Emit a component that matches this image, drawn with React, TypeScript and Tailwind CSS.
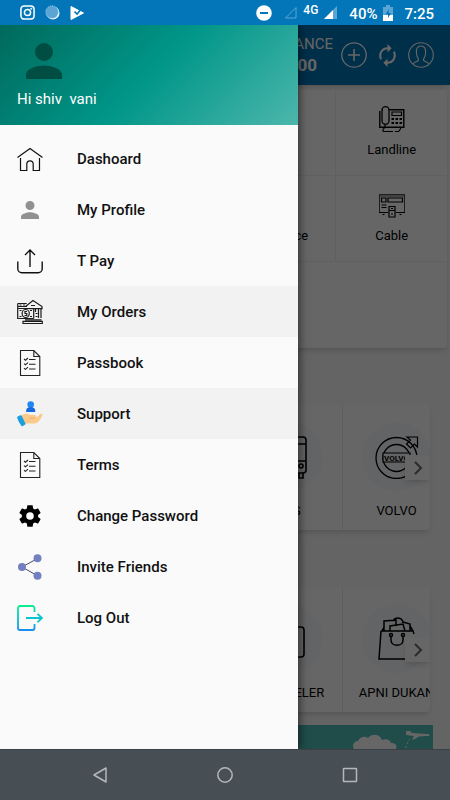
import type { ReactNode } from "react";

interface MenuItem {
  label: string;
  icon: ReactNode;
  active?: boolean;
}

function Svg({ children, size = "size-[26px]", box = "0 0 26 26" }: { children: ReactNode; size?: string; box?: string }) {
  return (
    <svg viewBox={box} className={`${size} shrink-0`} fill="none" aria-hidden="true">
      {children}
    </svg>
  );
}

function PersonIcon({ size }: { size: string }) {
  return (
    <Svg size={size} box="4 4 16 16">
      <path
        fill="currentColor"
        d="M12 12a4 4 0 1 0 0-8 4 4 0 0 0 0 8zm0 2c-2.67 0-8 1.34-8 4v2h16v-2c0-2.66-5.33-4-8-4z"
      />
    </Svg>
  );
}

function DocIcon() {
  return (
    <Svg>
      <path stroke="#222" strokeWidth="1.1" d="M3.5.5h13.3l6 6v19H3.5zM16.8.5v6h6" />
      <path stroke="#222" strokeWidth="1.1" d="M7 9l1.5 1.2L11 8M7 13.6l1.5 1.2 2.5-2.200M7 18.200l1.500 1.200 2.500-2.200M12 9.500h6.500M12 14.200h6.500M12 19h6.500" />
    </Svg>
  );
}

const menu: MenuItem[] = [
  {
    label: "Dashoard",
    icon: (
      <Svg>
        <path stroke="#111" strokeWidth="1.2" d="M.5 11.500 13 2.500l12.500 9M3.500 12v12.500h6.300V18a3.200 3.200 0 0 1 6.400 0v6.500h6.300V12" />
      </Svg>
    ),
  },
  {
    label: "My Profile",
    icon: <PersonIcon size="size-[18px] text-[#919191]" />,
  },
  {
    label: "T Pay",
    icon: (
      <Svg>
        <path stroke="#111" strokeWidth="1.4" d="M13 19V2M8 7l5-5 5 5M.8 13.500v7.200a4 4 0 0 0 4 4h16.400a4 4 0 0 0 4-4v-7.200" />
      </Svg>
    ),
  },
  {
    label: "My Orders",
    active: true,
    icon: (
      <Svg>
        <path stroke="#1c1c1c" strokeWidth="1.200" d="M.7 4.500h9M.7 4.500v15h16M1 7.500h9M.7 9.500h16v10M8.500 7.500 16 1.500l9 6v2.200H12M14 6.500h4M24 10v9M21.500 10v9M18.500 10v3M6 24.500h19.300v-2.200H6zM8 20.800h16.500M2.500 11.500h2M13 11.500h2M2.500 17.500h2M13 17.500h2M18.500 14.500h2M18.500 17.500h2M2.500 6h2M6 6h2" />
        <ellipse cx="8.700" cy="14.500" rx="3.600" ry="4" stroke="#1c1c1c" strokeWidth="1.200" />
        <path stroke="#1c1c1c" strokeWidth="1.200" d="M10 12.500H8v2h1.800v2H7.500" />
      </Svg>
    ),
  },
  { label: "Passbook", icon: <DocIcon /> },
  {
    label: "Support",
    active: true,
    icon: (
      <Svg>
        <circle cx="13.700" cy="3.500" r="3.300" fill="#1f86f2" />
        <path fill="#1468e0" d="M9.200 11V9.500c0-2 1.800-3.500 4.500-3.500s4.500 1.500 4.500 3.500V11z" />
        <path fill="#fbc98a" d="M4.500 14.500c2-1.700 4.600-2.200 6.700-1.500l2.300 1h4.300c1.600 0 1.800 2.300.4 2.500 2.400-.4 3-1.300 4.500-3 1-1 2.800-.8 2.800.4-.5 2-2.300 4.500-4 6.500-1.500 1.700-3.200 2-5.200 2H9.500l-1.500 1z" />
        <path stroke="#efa963" strokeWidth=".9" d="M12.500 17.200h5.600" />
        <path fill="#1a9fe0" d="m0 16 3.200-1.700c.7-.3 1.300 0 1.600.6l3.500 7.300c.3.7.1 1.300-.5 1.600L5 25.500C2.600 22.800.9 19.500 0 16z" />
      </Svg>
    ),
  },
  { label: "Terms", icon: <DocIcon /> },
  {
    label: "Change Password",
    icon: (
      <Svg box="0 0 24 24">
        <path
          fill="#000"
          d="M19.430 12.980c.04-.32.07-.64.07-.98s-.03-.66-.07-.98l2.110-1.650c.19-.15.24-.42.12-.64l-2-3.460c-.12-.22-.39-.3-.61-.22l-2.490 1c-.52-.4-1.080-.73-1.690-.98l-.38-2.650A.488.488 0 0 0 14 2h-4c-.25 0-.46.18-.49.42l-.38 2.650c-.61.25-1.170.59-1.690.98l-2.490-1c-.23-.09-.49 0-.61.22l-2 3.460c-.13.22-.07.49.12.64l2.110 1.650c-.04.32-.07.65-.07.98s.03.66.07.98l-2.110 1.650c-.19.15-.24.42-.12.64l2 3.460c.12.22.39.3.61.22l2.490-1c.52.4 1.080.73 1.690.98l.38 2.650c.03.24.24.42.49.42h4c.25 0 .46-.18.49-.42l.38-2.650c.61-.25 1.170-.59 1.690-.98l2.490 1c.23.09.49 0 .61-.22l2-3.460c.12-.22.07-.49-.12-.64l-2.110-1.650zM12 15.500a3.500 3.500 0 1 1 0-7 3.500 3.500 0 0 1 0 7z"
        />
      </Svg>
    ),
  },
  {
    label: "Invite Friends",
    icon: (
      <Svg>
        <path stroke="#444a66" d="M20.500 4.500 5 13l15.500 8.800" />
        <circle cx="20.500" cy="4.300" r="4" fill="#7280c0" />
        <circle cx="5" cy="13" r="4" fill="#7280c0" />
        <circle cx="20.500" cy="21.700" r="4" fill="#7280c0" />
      </Svg>
    ),
  },
  {
    label: "Log Out",
    icon: (
      <Svg>
        <defs>
          <linearGradient id="exit" gradientUnits="userSpaceOnUse" x1="0" y1="0" x2="0" y2="26">
            <stop stopColor="#0af08c" />
            <stop offset=".5" stopColor="#08c4cc" />
            <stop offset="1" stopColor="#1a8cf0" />
          </linearGradient>
        </defs>
        <path stroke="url(#exit)" strokeWidth="1.800" d="M17.500 7V3a2 2 0 0 0-2-2H3a2 2 0 0 0-2 2v20a2 2 0 0 0 2 2h12.500a2 2 0 0 0 2-2v-4" />
        <path stroke="#08c4cc" strokeWidth="1.800" d="M9 13h16M20.500 8.800 25 13l-4.500 4.200" />
      </Svg>
    ),
  },
];

const landline = (
  <Svg>
    <path stroke="#000" strokeWidth="1.400" d="M10 3.700h14.800v17.500H.8V5M3 4h1" />
    <rect x="3" y=".7" width="7" height="17.500" rx="3.500" stroke="#000" strokeWidth="1.300" />
    <path stroke="#000" strokeWidth="1.200" d="M13 6h9.500v3.500H13zM6 18v3.500c-2 1-3 4-1 4h9m2 0h3c2 0 2-2.500 3-4" />
    <path stroke="#000" strokeWidth="2" strokeDasharray="2.500 1.500" d="M12.500 13H23M12.500 17H23" />
  </Svg>
);

const cable = (
  <Svg>
    <path stroke="#000" strokeOpacity=".7" d="M.5 20V2.500h25V20M.5 4h25" />
    <path stroke="#000" strokeWidth="1.200" d="M0 20.500h9M17 20.500h9M3.500 22.500h2M20.500 22.500h2M2.500 6h4.500v4H2.500zM9 6h14.500v4H9zM2.500 13h5M2.500 15.500h5M10 14.500h6V25h-6zM10 18.500h6M12 16.500h2M12 22h2" />
  </Svg>
);

interface Tile {
  label: string;
  icon?: ReactNode;
}

const services: Tile[] = [
  { label: "" },
  { label: "" },
  { label: "" },
  { label: "Landline", icon: landline },
  { label: "" },
  { label: "" },
  { label: "Insurance" },
  { label: "Cable", icon: cable },
];

const bus = (
  <Svg size="size-11" box="0 0 44 44">
    <rect x="6" y="2" width="33" height="36" rx="3" stroke="#000" strokeWidth="1.600" />
    <path stroke="#000" strokeWidth="1.600" d="M6 9h33M6 26h33M32 38v5h4v-5" />
    <circle cx="34" cy="31" r="2" stroke="#000" strokeWidth="1.600" />
  </Svg>
);

const volvo = (
  <Svg size="size-11" box="0 0 44 44">
    <circle cx="21.500" cy="23" r="20.500" stroke="#000" strokeWidth="1.300" />
    <circle cx="21.500" cy="23" r="13.500" stroke="#000" strokeWidth="1.300" />
    <path d="M8 18h27v9H8z" fill="#f8f9fc" stroke="#000" strokeWidth="1.200" />
    <path stroke="#000" strokeWidth="1.200" d="M32 2h10.500v10l-3-3-4 4-4-4 4-4z" />
    <text x="21.500" y="25.500" textAnchor="middle" fontSize="8" fontWeight="700" fill="#000">
      VOLVO
    </text>
  </Svg>
);

const traveler = (
  <Svg size="size-11" box="0 0 44 44">
    <rect x="6" y="10" width="31" height="30" rx="3" stroke="#000" strokeWidth="1.600" />
  </Svg>
);

const bag = (
  <Svg size="size-11" box="0 0 44 44">
    <path stroke="#000" strokeWidth="1.500" d="M6 14h32l1 3M6 14 4 42h34M7 14l2-4M9 14V4l12-1v6M15 14V9l13-2 2 7M18 4c3-5 10-3 10 2M28 5l7 2v7M35 9l3 5" />
    <circle cx="16" cy="18" r="1.500" stroke="#000" strokeWidth="1.500" />
    <circle cx="28" cy="18" r="1.500" stroke="#000" strokeWidth="1.500" />
    <path stroke="#000" strokeWidth="1.500" d="M16 20v3c0 7 12 7 12 0v-3" />
  </Svg>
);

function Carousel({ tiles }: { tiles: Tile[] }) {
  return (
    <section className="relative ml-[18px] mr-5 h-[125px] overflow-hidden rounded-sm bg-white shadow-md">
      <div className="flex h-full">
        {tiles.map((tile, i) => (
          <div key={i} className="flex w-[108px] shrink-0 flex-col items-center border-l border-[#ececec] pt-[17px]">
            <div className="flex size-[69px] items-center justify-center rounded-full bg-[#f8f9fc]">{tile.icon}</div>
            <span className="mt-[10px] whitespace-nowrap text-[13px] leading-5 text-black">{tile.label}</span>
          </div>
        ))}
      </div>
      <button className="absolute right-0 top-[50px] flex size-[25px] items-center justify-center bg-white shadow-md" aria-label="Next">
        <svg viewBox="0 0 12 14" className="h-[14px] w-3" fill="none">
          <path d="m3 1 6 6-6 6" stroke="#6b6b6b" strokeWidth="2" />
        </svg>
      </button>
    </section>
  );
}

function StatusBar() {
  return (
    <div className="flex h-[25px] shrink-0 items-center justify-between bg-[#0276b8] pl-5 pr-4 text-white">
      <div className="flex items-center gap-[10px]">
        <svg viewBox="0 0 16 16" className="size-[15px]" fill="none" stroke="#fff">
          <rect x="1" y="1" width="14" height="14" rx="3.500" strokeWidth="1.600" />
          <circle cx="8" cy="8" r="3.300" strokeWidth="1.600" />
          <circle cx="12" cy="4" r=".6" fill="#fff" />
        </svg>
        <svg viewBox="0 0 16 16" className="size-[15px]">
          <circle cx="8.500" cy="8.500" r="7" fill="#e9f3fa" />
          <circle cx="7.500" cy="7.500" r="6.700" fill="#5ba5d4" stroke="#a9d1ea" strokeWidth=".8" strokeDasharray="1.200 1" />
        </svg>
        <svg viewBox="0 0 14 14" className="size-[14px]" fill="none">
          <path d="M1 .5 13.500 7 1 13.500z" fill="#fff" stroke="#fff" strokeLinejoin="round" />
          <path d="m4.500 5.500 2.500 2.500L12.500 1.500" stroke="#0276b8" strokeWidth="1.600" />
        </svg>
      </div>
      <div className="flex items-center text-[15px] font-medium leading-[18px]">
        <svg viewBox="0 0 16 16" className="mr-3 size-4">
          <circle cx="8" cy="8" r="7.800" fill="#fff" />
          <path d="M4 7h8v2H4z" fill="#0276b8" />
        </svg>
        <svg viewBox="0 0 13 13" className="mr-[6px] size-[13px]" fill="none">
          <path d="M12 1.500V12H1.500z" stroke="#5ba5d4" />
        </svg>
        <span className="mr-[6px] pb-[6px] text-xs leading-3">4G</span>
        <svg viewBox="0 0 13 13" className="mr-3 size-[13px]">
          <path d="M13 0v13H0z" fill="#5ba5d4" />
          <path d="M9 4v9H0z" fill="#fff" />
        </svg>
        <span className="mr-[6px] pt-[2px]">40%</span>
        <svg viewBox="0 0 10 16" className="mr-[11px] h-4 w-[10px]">
          <path d="M3 0h4v2h3v14H0V2h3z" fill="#5ba5d4" />
          <path d="M0 10h10v6H0z" fill="#fff" />
          <path d="M6 4 2.500 9.500H5V13l3-5H5.500z" fill="#0276b8" />
        </svg>
        <span className="pt-[2px]">7:25</span>
      </div>
    </div>
  );
}

function TopBar() {
  return (
    <header className="flex h-[60px] items-center justify-end bg-[#0276b8] pr-4 text-white shadow-md">
      <div className="mr-2 flex flex-col">
        <span className="text-[15px] leading-5">BALANCE</span>
        <span className="pl-4 text-[17px] font-bold leading-[22px]">0.00</span>
      </div>
      <button aria-label="Add money">
        <svg viewBox="0 0 26 26" className="size-[26px]" fill="none" stroke="#fff" strokeWidth="1.300">
          <circle cx="13" cy="13" r="12.200" />
          <path d="M13 7v12M7 13h12" strokeWidth="1.600" />
        </svg>
      </button>
      <button className="ml-2" aria-label="Refresh">
        <svg viewBox="0 0 24 24" className="size-[25px]" fill="#fff">
          <path d="M12 6v3l4-4-4-4v3a8 8 0 0 0-6.760 12.260l1.460-1.460A5.870 5.870 0 0 1 6 12a6 6 0 0 1 6-6zm6.760 1.740L17.300 9.200c.44.840.7 1.790.7 2.800a6 6 0 0 1-6 6v-3l-4 4 4 4v-3a8 8 0 0 0 6.760-12.260z" />
        </svg>
      </button>
      <button className="ml-2" aria-label="Account">
        <svg viewBox="0 0 26 26" className="size-[26px]" fill="none" stroke="#fff" strokeWidth="1.100">
          <circle cx="13" cy="13" r="12.300" />
          <path d="M5 22c1-2.500 5-2 5.500-4 .3-1.500-2-3-2-6.500-1-5 1.500-7.500 4.500-7.500s5.500 2.500 4.500 7.500c0 3.500-2.300 5-2 6.500.5 2 4.500 1.500 5.500 4" />
        </svg>
      </button>
    </header>
  );
}

function HomePage() {
  return (
    <div className="h-full overflow-hidden bg-[#fafafa]">
      <TopBar />
      <section className="mr-[3px] mt-[5px] grid grid-cols-4 grid-rows-3 rounded-sm bg-white shadow-md">
        {services.map((service, i) => (
          <div key={i} className="flex h-[86px] flex-col items-center border-b border-l border-[#f0f0f0] pt-4">
            <div className="h-[26px]">{service.icon}</div>
            <span className="mt-2 text-[13px] leading-5 text-black">{service.label}</span>
          </div>
        ))}
      </section>
      <div className="mt-[57px] flex flex-col gap-[57px]">
        <Carousel tiles={[{ label: "" }, { label: "" }, { label: "BUS", icon: bus }, { label: "VOLVO", icon: volvo }]} />
        <Carousel tiles={[{ label: "" }, { label: "" }, { label: "T.TRAVELER", icon: traveler }, { label: "APNI DUKAN", icon: bag }]} />
      </div>
      <div className="ml-4 mr-[17px] mt-[13px] flex h-32 items-start justify-end bg-[#50beb9]">
        <svg viewBox="0 0 80 40" className="h-10 w-20" fill="none">
          <path fill="#fff" d="M5 26a5 5 0 0 1 0-10c2-5 8-5 10-3 4-5 12-4 14 2 5-2 9 1 9 3 7 0 7 6 2 8z" />
          <path fill="#fff" d="M53 6h4l2 2 15 1c3 0 4 2 0 2l-8 .500-5 3h-2l2-3.500-8-1z" />
          <path stroke="#fff" strokeDasharray="2 2" d="M57 14c-3 3-4 7-5 14" />
        </svg>
      </div>
    </div>
  );
}

function Drawer() {
  return (
    <aside className="absolute inset-y-0 left-0 w-[298px] bg-[#fafafa] shadow-[2px_0_8px_rgba(0,0,0,0.5)]">
      <div className="h-[100px] bg-linear-[135deg,#00695c,#009688_50%,#4db6ac] pl-[17px] pt-[18px]">
        <PersonIcon size="ml-[9px] size-9 text-[#004d43]" />
        <p className="mt-[10px] whitespace-pre text-[15px] leading-5 text-white">Hi shiv  vani</p>
      </div>
      <nav className="pt-2">
        {menu.map((item) => (
          <a
            key={item.label}
            href="#"
            className={`flex h-[51px] items-center pl-[17px] text-[15px] font-medium leading-6 text-[#111] ${item.active ? "bg-[#f2f2f2]" : ""}`}
          >
            <span className="mr-[34px] flex w-[26px] justify-center">{item.icon}</span>
            {item.label}
          </a>
        ))}
      </nav>
    </aside>
  );
}

export default function App() {
  return (
    <div className="flex h-screen flex-col overflow-hidden font-['Roboto',sans-serif]">
      <StatusBar />
      <main className="relative min-h-0 flex-1 overflow-hidden">
        <HomePage />
        <div className="absolute inset-0 bg-black/60" />
        <Drawer />
      </main>
      <footer className="flex h-[51px] shrink-0 items-center justify-center gap-[109px] border-t border-[#3a4045] bg-[#474e54]">
        <button aria-label="Back">
          <svg viewBox="0 0 16 16" className="size-4" fill="none">
            <path d="M14 1v14L2 8z" stroke="#b5b8ba" strokeWidth="1.500" strokeLinejoin="round" />
          </svg>
        </button>
        <button aria-label="Home">
          <svg viewBox="0 0 16 16" className="size-4" fill="none">
            <circle cx="8" cy="8" r="7.200" stroke="#b5b8ba" strokeWidth="1.500" />
          </svg>
        </button>
        <button aria-label="Recent apps">
          <svg viewBox="0 0 16 16" className="size-4" fill="none">
            <rect x="1.500" y="1.500" width="13" height="13" rx=".5" stroke="#b5b8ba" strokeWidth="1.500" />
          </svg>
        </button>
      </footer>
    </div>
  );
}
